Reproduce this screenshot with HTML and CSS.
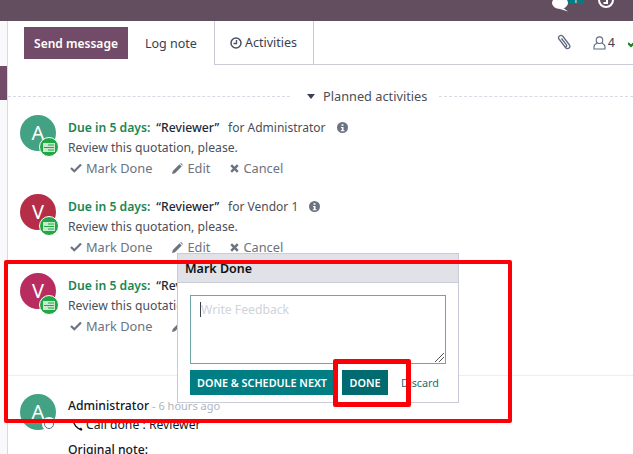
FILE: index.html
```html
<!DOCTYPE html>
<html lang="en">
<head>
  <meta charset="UTF-8">
  <title>Chatter</title>
  <link rel="stylesheet" href="styles.css">
</head>
<body>
  <header class="topbar">
    <div class="topbar-icons">
      <span class="chat-wrap">
        <svg class="topbar-chat" width="17" height="14" viewBox="0 0 17 14"><ellipse cx="8" cy="3" rx="8" ry="6" fill="#fff"/><path d="M10 7l6 4.500-8-2.500z" fill="#fff"/></svg>
        <span class="chat-badge">1</span>
      </span>
      <svg class="topbar-clock" width="16" height="14" viewBox="0 0 16 14"><path d="M8 -8a8 8 0 1 0 0 16a8 8 0 1 0 0-16zM8 -6a6 6 0 1 1 0 12a6 6 0 1 1 0-12z" fill="#fff"/><path d="M9 -2v5H5.500" stroke="#fff" stroke-width="2" fill="none"/></svg>
    </div>
  </header>

  <div class="layout">
    <aside class="gutter"><div class="gutter-mark"></div></aside>

    <main class="chatter">
      <div class="chatter-bar">
        <button class="btn-send">Send message</button>
        <span class="tab">Log note</span>
        <span class="tab tab-active">
          <svg width="12" height="12" viewBox="0 0 12 12"><circle cx="6" cy="6" r="5" fill="none" stroke="#4a4f63" stroke-width="1.500"/><path d="M6.500 3v3.500H3.500" fill="none" stroke="#4a4f63" stroke-width="1.300"/></svg>
          Activities
        </span>
        <div class="bar-right">
          <svg class="clip" width="16" height="17" viewBox="0 0 16 17"><path d="M3 5l6.500 8.500c1 1.300 2.700 1.300 3.600.5s1-2.300 0-3.500L7 2.500C6 1.300 4.500 1.200 3.500 2S2.200 4 3 5.200l5.500 7c.6.700 1.300.7 1.800.3s.5-1.100 0-1.800L5.500 4.500" fill="none" stroke="#5f6b85" stroke-width="1.300"/></svg>
          <span class="followers">
            <svg width="13" height="14" viewBox="0 0 13 14"><circle cx="6.500" cy="4.200" r="3.300" fill="none" stroke="#5f6b85" stroke-width="1.100"/><path d="M4 7.300C2 8 1 9.500 1 11v2h11v-2c0-1.500-1-3-3-3.700" fill="none" stroke="#5f6b85" stroke-width="1.100"/></svg>
            4
          </span>
          <svg class="tick" width="5" height="10" viewBox="0 0 5 10"><path d="M0 5l3 3 6-6" fill="none" stroke="#1c7d1c" stroke-width="2.200"/></svg>
        </div>
      </div>

      <div class="divider">
        <span class="divider-line divider-left"></span>
        <span class="divider-label"><i class="caret"></i>Planned activities</span>
        <span class="divider-line"></span>
      </div>

      <section class="activity">
        <div class="avatar avatar-a">A<span class="sub"><svg width="12" height="9" viewBox="0 0 12 9"><path d="M0 0h12v9H0z" fill="#fff" opacity=".75"/><path d="M5 2h6M1 4.500h10M5 7h6" stroke="#22a745" stroke-width="1"/></svg></span></div>
        <div class="activity-body">
          <div class="line"><b class="due">Due in 5 days:</b><span class="quoted">“Reviewer”</span><span class="for">for Administrator</span>
            <svg class="info" width="11" height="11" viewBox="0 0 11 11"><circle cx="5.500" cy="5.500" r="5.500" fill="#6b7280"/><path d="M4.500 2.200h2v1.500h-2zM4 5h2.500v3.200h1v1H3.800v-1h1V6H4z" fill="#fff"/></svg>
          </div>
          <div class="line note">Review this quotation, please.</div>
          <div class="line actions">
            <span class="act"><svg width="12" height="10" viewBox="0 0 12 10"><path d="M1 5l3.300 3.300L11 1.500" fill="none" stroke="#6b7280" stroke-width="2.200"/></svg>Mark Done</span>
            <span class="act"><svg width="11" height="11" viewBox="0 0 11 11"><path d="M0 11l.8-3L7.500 1.300l2.200 2.200L3 10.200zM8.200.6c.5-.5 1-.5 1.400-.1l.9.9c.4.400.4.900-.1 1.400z" fill="#6b7280"/></svg>Edit</span>
            <span class="act"><svg width="9" height="9" viewBox="0 0 9 9"><path d="M1.200 1.200l6.600 6.600M7.800 1.200L1.200 7.800" stroke="#6b7280" stroke-width="2.400"/></svg>Cancel</span>
          </div>
        </div>
      </section>

      <section class="activity">
        <div class="avatar avatar-v">V<span class="sub"><svg width="12" height="9" viewBox="0 0 12 9"><path d="M0 0h12v9H0z" fill="#fff" opacity=".75"/><path d="M5 2h6M1 4.500h10M5 7h6" stroke="#22a745" stroke-width="1"/></svg></span></div>
        <div class="activity-body">
          <div class="line"><b class="due">Due in 5 days:</b><span class="quoted">“Reviewer”</span><span class="for">for Vendor 1</span>
            <svg class="info" width="11" height="11" viewBox="0 0 11 11"><circle cx="5.500" cy="5.500" r="5.500" fill="#6b7280"/><path d="M4.500 2.200h2v1.500h-2zM4 5h2.500v3.200h1v1H3.800v-1h1V6H4z" fill="#fff"/></svg>
          </div>
          <div class="line note">Review this quotation, please.</div>
          <div class="line actions">
            <span class="act"><svg width="12" height="10" viewBox="0 0 12 10"><path d="M1 5l3.300 3.300L11 1.500" fill="none" stroke="#6b7280" stroke-width="2.200"/></svg>Mark Done</span>
            <span class="act"><svg width="11" height="11" viewBox="0 0 11 11"><path d="M0 11l.8-3L7.500 1.300l2.200 2.200L3 10.200zM8.200.6c.5-.5 1-.5 1.400-.1l.9.9c.4.400.4.900-.1 1.400z" fill="#6b7280"/></svg>Edit</span>
            <span class="act"><svg width="9" height="9" viewBox="0 0 9 9"><path d="M1.200 1.200l6.600 6.600M7.800 1.200L1.200 7.800" stroke="#6b7280" stroke-width="2.400"/></svg>Cancel</span>
          </div>
        </div>
      </section>

      <section class="activity activity-last">
        <div class="avatar avatar-m">V<span class="sub"><svg width="12" height="9" viewBox="0 0 12 9"><path d="M0 0h12v9H0z" fill="#fff" opacity=".75"/><path d="M5 2h6M1 4.500h10M5 7h6" stroke="#22a745" stroke-width="1"/></svg></span></div>
        <div class="activity-body">
          <div class="line"><b class="due">Due in 5 days:</b><span class="quoted">“Reviewer”</span></div>
          <div class="line note">Review this quotation, please.</div>
          <div class="line actions">
            <span class="act"><svg width="12" height="10" viewBox="0 0 12 10"><path d="M1 5l3.300 3.300L11 1.500" fill="none" stroke="#6b7280" stroke-width="2.200"/></svg>Mark Done</span>
            <span class="act"><svg width="11" height="11" viewBox="0 0 11 11"><path d="M0 11l.8-3L7.500 1.300l2.200 2.200L3 10.200zM8.200.6c.5-.5 1-.5 1.400-.1l.9.9c.4.400.4.900-.1 1.400z" fill="#6b7280"/></svg>Edit</span>
          </div>
        </div>
      </section>

      <section class="message">
        <div class="avatar avatar-a">A<span class="status"></span></div>
        <div class="message-body">
          <div class="line"><span class="author">Administrator</span><span class="ago"> - 6 hours ago</span></div>
          <div class="line call">
            <svg width="11" height="12" viewBox="0 0 11 12"><path d="M1.500 1c-.5 4 3.500 9 8.500 10" fill="none" stroke="#111" stroke-width="1.500"/><path d="M.5 2L3 .5 4 3 2 4zM7 10l2-1.500 1.500 2-2 1z" fill="#111"/></svg>
            Call done : Reviewer
          </div>
          <div class="line original">Original note:</div>
        </div>
      </section>
    </main>
  </div>

  <div class="popover">
    <div class="popover-head">Mark Done</div>
    <div class="popover-body">
      <div class="feedback"><span class="cursor"></span>Write Feedback
        <svg class="grip" width="9" height="9" viewBox="0 0 9 9"><path d="M0 9l9-9M4 9l5-5" stroke="#555" stroke-width="1"/></svg>
      </div>
      <div class="popover-actions">
        <span class="btn-teal btn-next">DONE &amp; SCHEDULE NEXT</span>
        <span class="btn-teal btn-dark">DONE</span>
        <span class="discard">Discard</span>
      </div>
    </div>
  </div>

  <div class="mark mark-big"></div>
  <div class="mark mark-small"></div>
</body>
</html>
```

FILE: styles.css
```css
html, body {
  margin: 0;
  padding: 0;
}

body {
  width: 633px;
  height: 454px;
  overflow: hidden;
  position: relative;
  background: #fff;
  color: #4a4f59;
  font-family: "Noto Sans", sans-serif;
  font-size: 12.200px;
}

.topbar {
  height: 21px;
  background: #624e5f;
  overflow: hidden;
  display: flex;
  justify-content: flex-end;
}

.topbar-icons {
  display: flex;
  align-items: flex-start;
  gap: 15px;
  padding-right: 19px;
}

.chat-wrap {
  display: flex;
  align-items: flex-start;
}

.topbar-chat {
  display: block;
}

.chat-badge {
  width: 15px;
  height: 4px;
  margin-left: -1px;
  background: #017e84;
  color: #fff;
  font-size: 9px;
  line-height: 0;
  text-align: center;
  overflow: hidden;
}

.topbar-clock {
  display: block;
}

.layout {
  display: flex;
  height: 433px;
}

.gutter {
  width: 7px;
  flex: none;
  padding-top: 45px;
  background: #f9f9fb;
  border-right: 1px solid #d8dae3;
}

.gutter-mark {
  height: 34px;
  background: #714b67;
}

.chatter {
  flex: 1;
  min-width: 0;
}

.chatter-bar {
  display: flex;
  height: 43px;
  padding-left: 16px;
}

.btn-send {
  height: 32px;
  width: 104px;
  margin-top: 6px;
  padding: 0;
  border: 0;
  background: #714b67;
  color: #fff;
  font: 600 12px "Noto Sans", sans-serif;
}

.tab {
  display: flex;
  align-items: center;
  gap: 3px;
  height: 32px;
  margin-top: 6px;
  padding: 0 17px;
  color: #374151;
  font-size: 12.500px;
}

.tab-active {
  height: 44px;
  margin-top: 0;
  padding: 0 16px 0 15px;
  box-sizing: border-box;
  border-left: 1px solid #c9ccd8;
  border-right: 1px solid #c9ccd8;
  border-bottom: 1px solid #c9ccd8;
}

.bar-right {
  flex: 1;
  height: 44px;
  box-sizing: border-box;
  display: flex;
  align-items: center;
  justify-content: flex-end;
  border-bottom: 1px solid #c9ccd8;
}

.clip {
  margin-right: 21px;
}

.followers {
  display: flex;
  align-items: center;
  gap: 2px;
  color: #374151;
  font-size: 12.500px;
}

.tick {
  margin-left: 13px;
}

.divider {
  display: flex;
  align-items: center;
  height: 20px;
  margin-top: 22px;
}

.divider-line {
  flex: 1;
  border-top: 1px dashed #d8dae3;
}

.divider-left {
  flex: none;
  width: 282px;
}

.divider-label {
  display: flex;
  align-items: center;
  gap: 8px;
  padding: 0 12px 0 17px;
  font-size: 12.750px;
}

.caret {
  width: 0;
  height: 0;
  border: 4px solid transparent;
  border-top: 5px solid #374151;
  border-bottom: 0;
}

.activity, .message {
  display: flex;
  gap: 12px;
  padding-left: 12px;
}

.activity {
  height: 79px;
}

.activity:first-of-type {
  margin-top: 9px;
}

.activity-last {
  height: 103px;
  box-sizing: border-box;
  border-bottom: 1px solid #eceef2;
}

.message {
  margin-top: 18px;
}

.avatar {
  flex: none;
  width: 36px;
  height: 36px;
  border-radius: 50%;
  position: relative;
  color: #fff;
  font-size: 20px;
  line-height: 36px;
  text-align: center;
}

.avatar-a { background: #43a283; }
.avatar-v { background: #b52d47; }
.avatar-m { background: #b92c5f; }

.sub {
  position: absolute;
  right: -3px;
  bottom: -6px;
  width: 18px;
  height: 18px;
  border: 1px solid #fff;
  background: #22a745;
  border-radius: 50%;
  display: flex;
  align-items: center;
  justify-content: center;
}

.status {
  position: absolute;
  right: 2px;
  bottom: 1px;
  width: 8px;
  height: 8px;
  border: 1px solid #5f6b85;
  border-radius: 50%;
  background: #fff;
  box-shadow: 0 0 0 2px #fff;
}

.activity-body {
  flex: 1;
  min-width: 0;
  padding-top: 2px;
}

.message-body {
  flex: 1;
  min-width: 0;
  padding-top: 1px;
}

.line {
  display: flex;
  align-items: center;
  height: 20px;
  white-space: nowrap;
}

.due {
  font-weight: 600;
  color: #198754;
}

.quoted {
  margin-left: 6px;
  color: #1f2937;
  font-weight: 500;
}

.for {
  margin-left: 9px;
  color: #4a4f59;
  font-size: 12px;
}

.info {
  margin-left: 11px;
}

.actions {
  gap: 20px;
  margin-top: 1px;
  padding-left: 2px;
  color: #6b7280;
  font-size: 12.800px;
}

.act {
  display: flex;
  align-items: center;
  gap: 4px;
}

.author {
  color: #111827;
  font-weight: 500;
}

.ago {
  color: #adb5bd;
  margin-left: 3px;
  font-size: 11px;
}

.call {
  height: 19px;
  gap: 3px;
  padding-left: 4px;
  color: #111827;
}

.original {
  margin-top: 5px;
  color: #111827;
  font-weight: 500;
}

/* popup over the third activity */
.popover {
  position: absolute;
  left: 177px;
  top: 253px;
  width: 280px;
  height: 148px;
  background: #fff;
  border: 1px solid #c9ccd8;
}

.popover-head {
  height: 28px;
  line-height: 29px;
  padding-left: 7px;
  background: #e0e2e7;
  border-bottom: 1px solid #c9ccd8;
  color: #111;
  font-weight: 600;
  font-size: 12.500px;
}

.popover-body {
  padding: 12px 12px 0 12px;
}

.feedback {
  position: relative;
  height: 67px;
  width: 245px;
  border: 1px solid #6ea6a8;
  padding-left: 9px;
  color: #ced4da;
  line-height: 28px;
}

.cursor {
  display: inline-block;
  width: 1px;
  height: 15px;
  background: #374151;
  vertical-align: -3px;
}

.grip {
  position: absolute;
  right: 1px;
  bottom: 1px;
}

.popover-actions {
  display: flex;
  align-items: center;
  margin-top: 6px;
}

.btn-teal {
  height: 25px;
  line-height: 25px;
  background: #017e84;
  color: #fff;
  font-size: 10.800px;
  font-weight: 600;
  text-align: center;
}

.btn-next {
  width: 145px;
  padding-left: 7px;
  box-sizing: border-box;
  text-align: left;
}

.btn-dark {
  width: 46px;
  margin-left: 7px;
  background: #016b6f;
}

.discard {
  margin-left: 13px;
  color: #1c6f74;
  font-size: 10.800px;
}

/* hand drawn red annotations on the screenshot */
.mark {
  position: absolute;
  border: 4px solid #fb0007;
  border-radius: 2px;
  box-sizing: border-box;
}

.mark-big {
  left: 4px;
  top: 260px;
  width: 508px;
  height: 163px;
}

.mark-small {
  left: 333px;
  top: 359px;
  width: 78px;
  height: 48px;
  border-width: 5px;
}
```
